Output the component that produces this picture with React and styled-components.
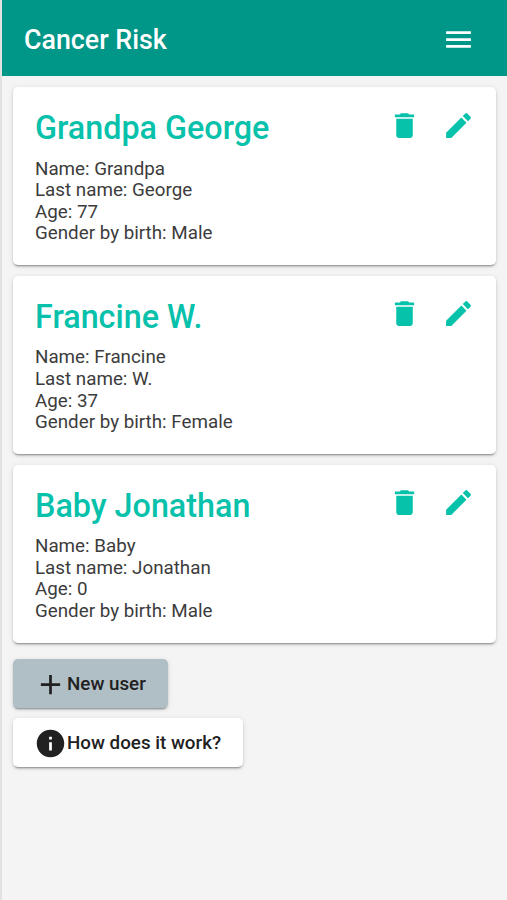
import React from 'react'
import { styled, createGlobalStyle } from 'styled-components'
import { MdAdd, MdDelete, MdEdit, MdInfo, MdMenu } from 'react-icons/md'

const GlobalStyle = createGlobalStyle`
    * {
        box-sizing: border-box;
    }
    body {
        margin: 0;
        background-color: #f4f4f4;
        font-family: Roboto, sans-serif;
    }
`
const Container = styled.div`
    height: 100vh;
    border-left: 2px solid #e2e2e2;
    background-color: #f4f4f4;
    overflow: hidden;
`
const Header = styled.header`
    height: 76px;
    padding: 3px 32px 0px 22px;
    display: flex;
    align-items: center;
    justify-content: space-between;
    background-color: #009688;
    color: white;
`
const Logo = styled.h1`
    margin: 0px;
    font-size: 26.8px;
    line-height: 32px;
    font-weight: 500;
`
const IconButton = styled.button`
    padding: 0px;
    border: none;
    display: flex;
    background: none;
    color: inherit;
    font-size: 33px;
    cursor: pointer;
`
const Main = styled.main`
    padding: 11px;
`
const List = styled.div`
    display: flex;
    flex-direction: column;
    gap: 10.75px;
`
const Card = styled.div`
    height: 178px;
    padding: 21px 21px 0px 22px;
    border-radius: 5px;
    background-color: white;
    box-shadow: 0px 3px 1px -2px rgba(0,0,0,0.2), 0px 2px 2px 0px rgba(0,0,0,0.14), 0px 1px 5px 0px rgba(0,0,0,0.12);
`
const CardTop = styled.div`
    display: flex;
    justify-content: space-between;
`
const Name = styled.h2`
    margin: 0px;
    font-size: 32.3px;
    line-height: 40px;
    font-weight: 500;
    color: #08c1ab;
`
const Actions = styled.div`
    padding-top: 0.5px;
    display: flex;
    gap: 20.7px;
    color: #06c2ab;
`
const Info = styled.div`
    margin-top: 10.6px;
    font-size: 18.8px;
    line-height: 21.6px;
    color: #3c3c3c;
`
const Buttons = styled.div`
    margin-top: 16px;
    display: flex;
    flex-direction: column;
    align-items: flex-start;
    gap: 10px;
`
const Button = styled.button`
    width: ${props => props.$width};
    height: 49px;
    padding: 1px 0px 0px 21px;
    border: none;
    border-radius: 5px;
    display: flex;
    align-items: center;
    background-color: ${props => props.$color || 'white'};
    color: #212121;
    font-family: inherit;
    font-size: 18.8px;
    font-weight: 500;
    white-space: nowrap;
    box-shadow: 0px 3px 1px -2px rgba(0,0,0,0.2), 0px 2px 2px 0px rgba(0,0,0,0.14), 0px 1px 5px 0px rgba(0,0,0,0.12);
    cursor: pointer;

    svg {
        flex: none;
        margin-top: 1px;
        font-size: 33px;
    }
`

const users = [
  { id: 1, title: 'Grandpa George', name: 'Grandpa', lastName: 'George', age: 77, gender: 'Male' },
  { id: 2, title: 'Francine W.', name: 'Francine', lastName: 'W.', age: 37, gender: 'Female' },
  { id: 3, title: 'Baby Jonathan', name: 'Baby', lastName: 'Jonathan', age: 0, gender: 'Male' },
]

const User = ({ item }) => {
  return (
    <Card>
      <CardTop>
        <Name>{item.title}</Name>
        <Actions>
          <IconButton aria-label='delete'><MdDelete/></IconButton>
          <IconButton aria-label='edit'><MdEdit/></IconButton>
        </Actions>
      </CardTop>
      <Info>
        <div>Name: {item.name}</div>
        <div>Last name: {item.lastName}</div>
        <div>Age: {item.age}</div>
        <div>Gender by birth: {item.gender}</div>
      </Info>
    </Card>
  )
}

const App = () => {
  return (
    <Container>
      <GlobalStyle/>
      <Header>
        <Logo>Cancer Risk</Logo>
        <IconButton aria-label='menu'><MdMenu/></IconButton>
      </Header>
      <Main>
        <List>
          {users.map(item => (
            <User item={item} key={item.id}/>
          ))}
        </List>
        <Buttons>
          <Button $width='155px' $color='#b0bec5'><MdAdd/>New user</Button>
          <Button $width='230px'><MdInfo/>How does it work?</Button>
        </Buttons>
      </Main>
    </Container>
  )
}

export default App
